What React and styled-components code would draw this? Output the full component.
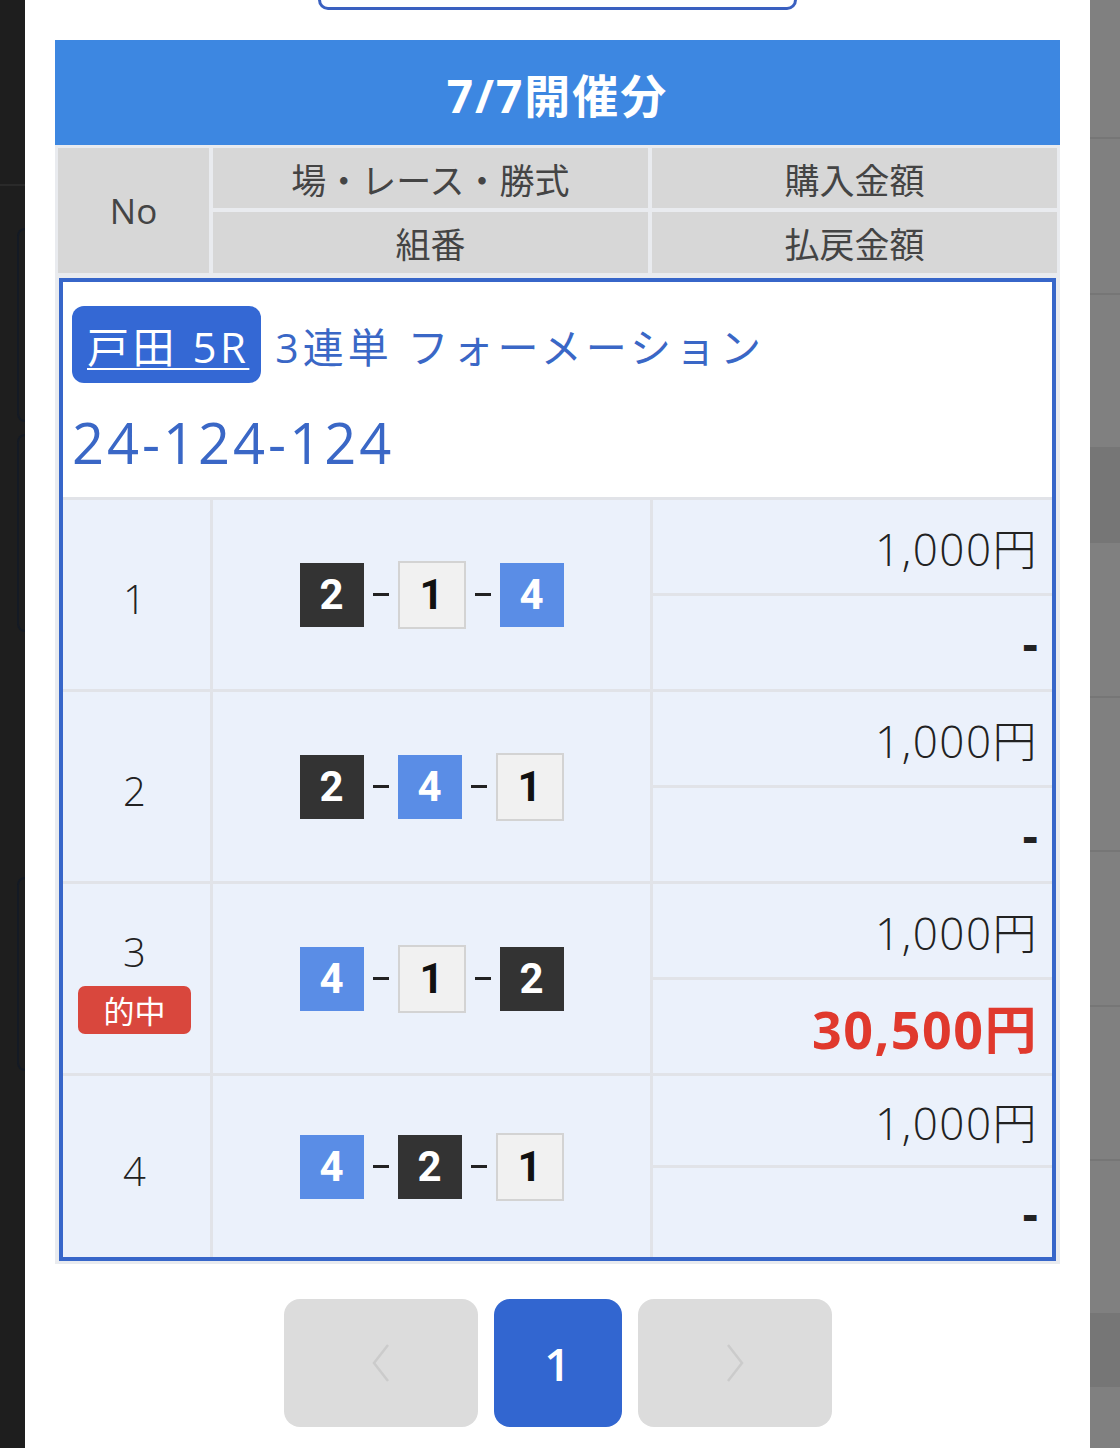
import React from 'react';
import styled, { createGlobalStyle } from 'styled-components';

const JP = `"Noto Sans CJK JP", "Noto Sans", sans-serif`;
// latin glyphs from a wider face, kana/kanji fall through to Noto CJK
const NUM = `"Open Sans", "Noto Sans CJK JP", sans-serif`;

const GlobalStyle = createGlobalStyle`
  html, body {
    margin: 0;
    padding: 0;
    background: #1e1e1e;
    font-family: ${JP};
  }
`;

// boat colours by lane number
const LANE = {
  1: { bg: '#f1f1f1', fg: '#111', border: '#d3d3d3' },
  2: { bg: '#333333', fg: '#fff', border: '#333333' },
  3: { bg: '#d9473d', fg: '#fff', border: '#d9473d' },
  4: { bg: '#5a8de6', fg: '#fff', border: '#5a8de6' },
  5: { bg: '#f2d43a', fg: '#111', border: '#f2d43a' },
  6: { bg: '#3da35d', fg: '#fff', border: '#3da35d' },
};

const tickets = [
  { no: 1, combo: [2, 1, 4], stake: '1,000円', payout: null },
  { no: 2, combo: [2, 4, 1], stake: '1,000円', payout: null },
  { no: 3, combo: [4, 1, 2], stake: '1,000円', payout: '30,500円', hit: true },
  { no: 4, combo: [4, 2, 1], stake: '1,000円', payout: null },
];

const App = () => (
  <>
    <GlobalStyle />
    <Screen>
      <LeftShade>
        <GhostLine />
        <GhostCard $h={190} />
        <GhostCard $h={194} />
        <GhostCard $h={190} $top={245} />
      </LeftShade>

      <Sheet>
        <CutButton />
        <DayHeader>7/7開催分</DayHeader>

        <TableFrame>
          <HeadGrid>
            <HeadCell $tall>No</HeadCell>
            <HeadCell>場・レース・勝式</HeadCell>
            <HeadCell>購入金額</HeadCell>
            <HeadCell>組番</HeadCell>
            <HeadCell>払戻金額</HeadCell>
          </HeadGrid>

          <TicketBlock>
            <TicketInfo>
              <RaceLine>
                <RaceBadge>戸田 5R</RaceBadge>
                <BetType>3連単 フォーメーション</BetType>
              </RaceLine>
              <Formation>24-124-124</Formation>
            </TicketInfo>

            {tickets.map((t) => (
              <TicketRow key={t.no}>
                <NoCell>
                  <span>{t.no}</span>
                  {t.hit && <HitBadge>的中</HitBadge>}
                </NoCell>
                <ComboCell>
                  {t.combo.map((n, i) => (
                    <React.Fragment key={i}>
                      {i > 0 && <Dash />}
                      <LaneBox $lane={n}>{n}</LaneBox>
                    </React.Fragment>
                  ))}
                </ComboCell>
                <MoneyCol>
                  <Money>{t.stake}</Money>
                  {t.payout ? (
                    <Money $win>{t.payout}</Money>
                  ) : (
                    <Money $empty>-</Money>
                  )}
                </MoneyCol>
              </TicketRow>
            ))}
          </TicketBlock>
        </TableFrame>

        <Pager>
          <PageButton $wide disabled>
            <svg width="26" height="42" viewBox="0 0 26 42">
              <polyline points="20,3 6,21 20,39" fill="none" stroke="#cbcbcb" strokeWidth="2.5" />
            </svg>
          </PageButton>
          <PageButton $active>1</PageButton>
          <PageButton $wide disabled>
            <svg width="26" height="42" viewBox="0 0 26 42">
              <polyline points="6,3 20,21 6,39" fill="none" stroke="#cbcbcb" strokeWidth="2.5" />
            </svg>
          </PageButton>
        </Pager>
      </Sheet>

      <RightShade>
        {[137, 154, 152, 92, 153, 152, 153, 152, 152, 70, 81].map((h, i) => (
          <ShadeRow key={i} $h={h} $dark={i === 3 || i === 9} />
        ))}
      </RightShade>
    </Screen>
  </>
);

const Screen = styled.div`
  display: grid;
  grid-template-columns: 25px 1065px 30px;
  min-height: 1448px;
  overflow: hidden;
`;

const LeftShade = styled.div`
  background: #1e1e1e;
  display: flex;
  flex-direction: column;
  align-items: flex-end;
  padding-top: 184px;
`;

const GhostLine = styled.div`
  width: 25px;
  height: 2px;
  background: #2a2a2a;
  margin-bottom: 30px;
`;

const GhostCard = styled.div`
  width: 6px;
  height: ${(p) => p.$h}px;
  margin-top: ${(p) => p.$top || 12}px;
  border: 2px solid #141a24;
  border-right: none;
  border-radius: 8px 0 0 8px;
`;

const RightShade = styled.div`
  background: #808080;
  display: flex;
  flex-direction: column;
`;

const ShadeRow = styled.div`
  height: ${(p) => p.$h}px;
  flex-shrink: 0;
  background: ${(p) => (p.$dark ? '#767676' : '#808080')};
  border-bottom: 2px solid #767676;
`;

const Sheet = styled.div`
  background: #fff;
  padding: 0 30px;
  display: flex;
  flex-direction: column;
`;

const CutButton = styled.div`
  align-self: flex-start;
  margin-left: 263px;
  width: 473px;
  height: 7px;
  border: 3px solid #3a60c0;
  border-top: none;
  border-radius: 0 0 14px 14px;
`;

const DayHeader = styled.div`
  margin-top: 30px;
  height: 105px;
  background: #3d87e1;
  color: #fff;
  font-family: ${NUM};
  font-size: 46px;
  font-weight: 700;
  letter-spacing: 2px;
  display: flex;
  align-items: center;
  justify-content: center;
`;

const TableFrame = styled.div`
  background: #e9ebef;
  padding: 3px;
  display: flex;
  flex-direction: column;
  gap: 5px;
`;

const HeadGrid = styled.div`
  display: grid;
  grid-template-columns: 151px 435px 1fr;
  grid-template-rows: 60px 61px;
  gap: 4px;
`;

const HeadCell = styled.div`
  background: #d7d7d7;
  color: #444;
  font-family: ${NUM};
  font-size: 35px;
  display: flex;
  align-items: center;
  justify-content: center;
  grid-row: ${(p) => (p.$tall ? 'span 2' : 'auto')};
`;

const TicketBlock = styled.div`
  margin: 0 1px;
  border: 4px solid #3766c9;
  background: #e1e3e8;
  display: flex;
  flex-direction: column;
  gap: 3px;
`;

const TicketInfo = styled.div`
  background: #fff;
  padding: 24px 9px 22px;
  color: #3a67c6;
  font-family: ${NUM};
`;

const RaceLine = styled.div`
  display: flex;
  align-items: center;
  gap: 14px;
`;

const RaceBadge = styled.span`
  background: #3468d4;
  color: #fff;
  font-size: 42px;
  letter-spacing: 3.5px;
  text-decoration: underline;
  text-decoration-thickness: 2px;
  text-underline-offset: 5px;
  height: 77px;
  padding: 0 12px 0 15px;
  border-radius: 12px;
  display: inline-flex;
  align-items: center;
`;

const BetType = styled.span`
  font-size: 41px;
  letter-spacing: 4px;
`;

const Formation = styled.div`
  margin-top: 26px;
  font-size: 56px;
  line-height: 66px;
  font-weight: 400;
  letter-spacing: 3px;
`;

const TicketRow = styled.div`
  display: grid;
  grid-template-columns: 147px 437px 1fr;
  gap: 3px;
  height: 189px;

  &:last-child {
    height: 181px;
  }
`;

const NoCell = styled.div`
  background: #ebf1fb;
  color: #222;
  font-family: ${NUM};
  font-size: 40px;
  font-weight: 300;
  display: flex;
  flex-direction: column;
  align-items: center;
  justify-content: center;
  gap: 14px;
  line-height: 1;
  padding-top: 8px;
  padding-right: 4px;
`;

const HitBadge = styled.span`
  background: #d9473d;
  color: #fff;
  font-family: ${JP};
  font-size: 31px;
  font-weight: 400;
  width: 113px;
  height: 48px;
  border-radius: 7px;
  display: flex;
  align-items: center;
  justify-content: center;
`;

const ComboCell = styled.div`
  background: #ebf1fb;
  display: flex;
  align-items: center;
  justify-content: center;
  gap: 9px;
`;

const LaneBox = styled.span`
  width: 64px;
  height: 64px;
  box-sizing: border-box;
  background: ${(p) => LANE[p.$lane].bg};
  color: ${(p) => LANE[p.$lane].fg};
  border: 2px solid ${(p) => LANE[p.$lane].border};
  font-family: "Roboto", sans-serif;
  font-size: 42px;
  font-weight: 700;
  display: flex;
  align-items: center;
  justify-content: center;
  ${(p) => (p.$lane === 1 ? 'width: 68px; height: 68px;' : '')}
`;

const Dash = styled.span`
  width: 16px;
  height: 3px;
  background: #222;
`;

const MoneyCol = styled.div`
  display: flex;
  flex-direction: column;
  gap: 3px;
`;

const Money = styled.div`
  flex: 1;
  background: #ebf1fb;
  display: flex;
  align-items: center;
  justify-content: flex-end;
  padding-right: 14px;
  font-family: ${NUM};
  color: ${(p) => (p.$win ? '#e0392d' : '#222')};
  font-size: ${(p) => (p.$win ? '52px' : p.$empty ? '48px' : '44px')};
  font-weight: ${(p) => (p.$win || p.$empty ? 700 : 300)};
  letter-spacing: ${(p) => (p.$win ? '1.5px' : p.$empty ? '0' : '1.5px')};
`;

const Pager = styled.div`
  margin-top: 35px;
  display: flex;
  justify-content: center;
  gap: 16px;
`;

const PageButton = styled.button`
  width: ${(p) => (p.$wide ? '194px' : '128px')};
  height: 128px;
  border: none;
  border-radius: 16px;
  background: ${(p) => (p.$active ? '#3266d0' : '#dcdcdc')};
  color: #fff;
  font-family: ${NUM};
  font-size: 46px;
  font-weight: 600;
  display: flex;
  align-items: center;
  justify-content: center;
  padding: 0;
`;

export default App;
